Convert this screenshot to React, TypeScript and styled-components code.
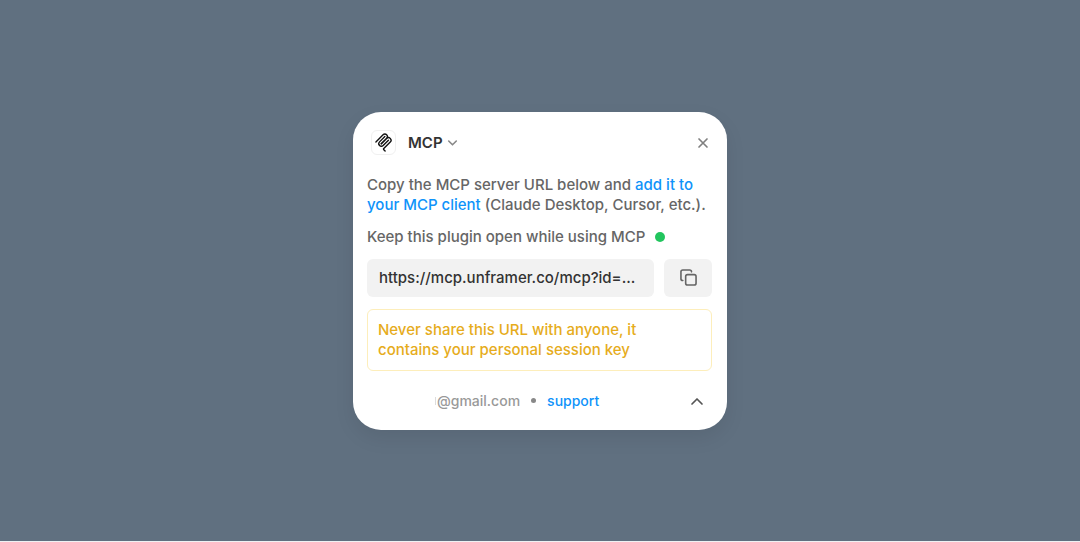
import React from "react";
import styled, { createGlobalStyle } from "styled-components";

const GlobalStyle = createGlobalStyle`
  *, *::before, *::after { box-sizing: border-box; }
  body {
    margin: 0;
    font-family: Inter, "Liberation Sans", sans-serif;
    font-size: 15px;
    line-height: 20px;
    font-weight: 500;
    color: #666666;
  }
  button, input { font: inherit; }
`;

const Page = styled.main`
  min-height: 100vh;
  display: flex;
  align-items: center;
  justify-content: center;
  background: #607080;
  border-bottom: 1px solid #eef1f3;
`;

const Card = styled.section`
  width: 374px;
  max-width: 100%;
  display: flex;
  flex-direction: column;
  padding: 0 15px 0 14px;
  border-radius: 28px;
  background: #ffffff;
  box-shadow: 0 8px 20px rgba(0, 0, 0, 0.08);
`;

const Header = styled.header`
  display: flex;
  align-items: center;
  justify-content: space-between;
  height: 63px;
  padding: 0 0 1px 4px;
`;

const IconButton = styled.button<{ $color: string }>`
  display: flex;
  padding: 2px;
  border: 0;
  background: none;
  color: ${(p) => p.$color};
  cursor: pointer;
`;

const PluginMenu = styled.button`
  display: flex;
  align-items: center;
  gap: 4px;
  padding: 0;
  border: 0;
  background: none;
  color: #333333;
  font-weight: 600;
  cursor: pointer;
`;

const LogoBox = styled.span`
  display: flex;
  align-items: center;
  justify-content: center;
  width: 25px;
  height: 25px;
  margin-right: 8px;
  border: 1px solid #f0f0f0;
  border-radius: 6px;
  color: #111111;
`;

const Content = styled.div`
  display: flex;
  flex-direction: column;
  gap: 12px;
`;

const Text = styled.p`
  margin: 0;
`;

const Link = styled.a`
  color: #0f93fa;
  text-decoration: none;
`;

const Status = styled.p`
  display: flex;
  align-items: center;
  gap: 10px;
  margin: 0;
`;

const StatusDot = styled.span`
  width: 10px;
  height: 10px;
  border-radius: 50%;
  background: #22c55e;
`;

const UrlRow = styled.div`
  display: flex;
  gap: 10px;
`;

const UrlInput = styled.input`
  flex: 1;
  min-width: 0;
  height: 38px;
  padding: 0 12px;
  border: 0;
  border-radius: 6px;
  outline: 0;
  background: #f2f2f2;
  color: #333333;
  text-overflow: ellipsis;
`;

const CopyButton = styled.button`
  display: flex;
  align-items: center;
  justify-content: center;
  width: 48px;
  height: 38px;
  padding: 0;
  border: 0;
  border-radius: 6px;
  background: #f2f2f2;
  color: #666666;
  cursor: pointer;
`;

const Warning = styled.p`
  margin: 0;
  padding: 10px;
  border: 1px solid #fdeebb;
  border-radius: 6px;
  color: #e6ac1c;
`;

const Footer = styled.footer`
  display: flex;
  align-items: center;
  justify-content: space-between;
  height: 59px;
  padding: 1px 5px 0 68px;
  font-size: 14px;
  color: #999999;
`;

const Account = styled.div`
  display: flex;
  align-items: center;
  gap: 11px;
`;

const Email = styled.span`
  display: flex;
  align-items: center;
  gap: 1px;

  &::before {
    content: "";
    width: 1px;
    height: 8px;
    background: #dddddd;
  }
`;

const Separator = styled.span`
  width: 5px;
  height: 5px;
  border-radius: 50%;
  background: #888888;
`;

const strokeProps = {
  fill: "none",
  stroke: "currentColor",
  strokeLinecap: "round" as const,
  strokeLinejoin: "round" as const,
  "aria-hidden": true,
};

const McpLogo = () => (
  <svg width="19" height="19" viewBox="0 0 180 180" strokeWidth="13" {...strokeProps}>
    <path d="M18 84.85 85.88 16.97c9.37-9.37 24.57-9.37 33.94 0s9.37 24.57 0 33.94L68.56 102.18" />
    <path d="m69.27 101.47 50.55-50.56c9.37-9.37 24.57-9.37 33.94 0l.36.36c9.37 9.37 9.37 24.56 0 33.94L92.72 146.6a8 8 0 0 0 0 11.31l12.61 12.61" />
    <path d="M102.85 33.94 52.65 84.15c-9.37 9.37-9.37 24.56 0 33.94s24.57 9.37 33.94 0l50.2-50.21" />
  </svg>
);

export default function App() {
  return (
    <>
      <GlobalStyle />
      <Page>
        <Card aria-label="MCP">
          <Header>
            <PluginMenu type="button" aria-haspopup="menu">
              <LogoBox>
                <McpLogo />
              </LogoBox>
              MCP
              <svg width="11" height="11" viewBox="0 0 11 11" strokeWidth="1.6" {...strokeProps} stroke="#888888">
                <path d="m1.7 4 3.8 3.8L9.3 4" />
              </svg>
            </PluginMenu>
            <IconButton type="button" $color="#808080" aria-label="Close">
              <svg width="14" height="14" viewBox="0 0 14 14" strokeWidth="1.7" {...strokeProps}>
                <path d="m3 3 8 8M11 3l-8 8" />
              </svg>
            </IconButton>
          </Header>
          <Content>
            <Text>
              Copy the MCP server URL below and <Link href="#clients">add it to your MCP client</Link> (Claude
              Desktop, Cursor, etc.).
            </Text>
            <Status>
              Keep this plugin open while using MCP
              <StatusDot />
            </Status>
            <UrlRow>
              <UrlInput readOnly aria-label="MCP server URL" value="https://mcp.unframer.co/mcp?id=..." />
              <CopyButton type="button" aria-label="Copy URL">
                <svg width="17" height="17" viewBox="0 0 18 18" strokeWidth="1.7" {...strokeProps}>
                  <rect x="6" y="6" width="11" height="11" rx="2" />
                  <path d="M3 12.2c-1.2 0-2-.8-2-2V3c0-1.2.8-2 2-2h7.2c1.2 0 2 .8 2 2" />
                </svg>
              </CopyButton>
            </UrlRow>
            <Warning>Never share this URL with anyone, it contains your personal session key</Warning>
          </Content>
          <Footer>
            <Account>
              <Email>@gmail.com</Email>
              <Separator />
              <Link href="#support">support</Link>
            </Account>
            <IconButton type="button" $color="#555555" aria-label="Collapse">
              <svg width="16" height="16" viewBox="0 0 16 16" strokeWidth="1.7" {...strokeProps}>
                <path d="m3 11 5-5 5 5" />
              </svg>
            </IconButton>
          </Footer>
        </Card>
      </Page>
    </>
  );
}
